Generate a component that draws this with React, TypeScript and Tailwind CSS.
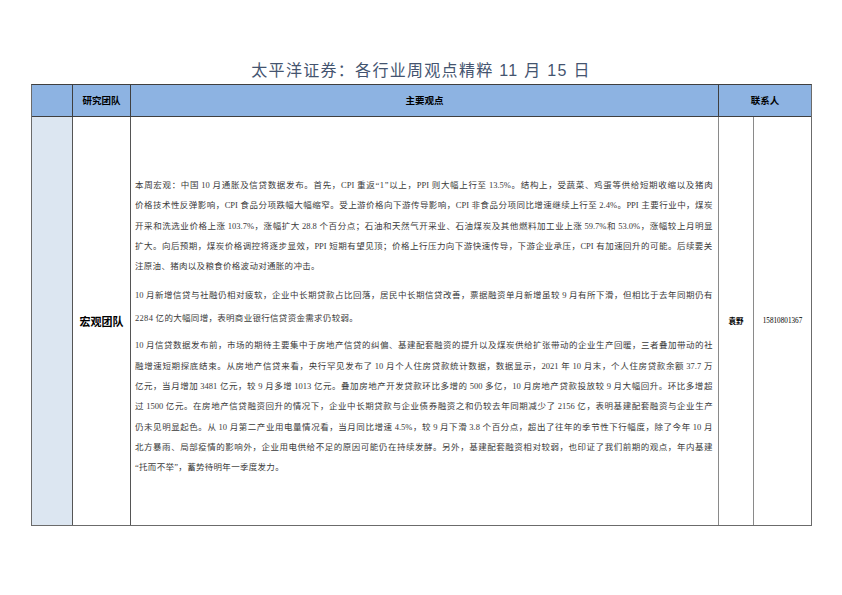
import React from "react";

const body = "font-['Liberation_Serif','Noto_Sans_CJK_SC',serif]";
const sans = "font-['Liberation_Sans','Noto_Sans_CJK_SC',sans-serif]";

const p1 = [
  "本周宏观：中国 10 月通胀及信贷数据发布。首先，CPI 重返“1”以上，PPI 则大幅上行至 13.5%。结构上，受蔬菜、鸡蛋等供给短期收缩以及猪肉",
  "价格技术性反弹影响，CPI 食品分项跌幅大幅缩窄。受上游价格向下游传导影响，CPI 非食品分项同比增速继续上行至 2.4%。PPI 主要行业中，煤炭",
  "开采和洗选业价格上涨 103.7%，涨幅扩大 28.8 个百分点；石油和天然气开采业、石油煤炭及其他燃料加工业上涨 59.7%和 53.0%，涨幅较上月明显",
  "扩大。向后预期，煤炭价格调控将逐步显效，PPI 短期有望见顶；价格上行压力向下游快速传导，下游企业承压，CPI 有加速回升的可能。后续要关",
];
const p1last = "注原油、猪肉以及粮食价格波动对通胀的冲击。";

const p2 = [
  "10 月新增信贷与社融仍相对疲软，企业中长期贷款占比回落，居民中长期信贷改善，票据融资单月新增虽较 9 月有所下滑，但相比于去年同期仍有",
];
const p2last = "2284 亿的大幅同增，表明商业银行信贷资金需求仍较弱。";

const p3 = [
  "10 月信贷数据发布前，市场的期待主要集中于房地产信贷的纠偏、基建配套融资的提升以及煤炭供给扩张带动的企业生产回暖，三者叠加带动的社",
  "融增速短期探底结束。从房地产信贷来看，央行罕见发布了 10 月个人住房贷款统计数据，数据显示，2021 年 10 月末，个人住房贷款余额 37.7 万",
  "亿元，当月增加 3481 亿元，较 9 月多增 1013 亿元。叠加房地产开发贷款环比多增的 500 多亿，10 月房地产贷款投放较 9 月大幅回升。环比多增超",
  "过 1500 亿元。在房地产信贷融资回升的情况下，企业中长期贷款与企业债券融资之和仍较去年同期减少了 2156 亿，表明基建配套融资与企业生产",
  "仍未见明显起色。从 10 月第二产业用电量情况看，当月同比增速 4.5%，较 9 月下滑 3.8 个百分点，超出了往年的季节性下行幅度，除了今年 10 月",
  "北方暴雨、局部疫情的影响外，企业用电供给不足的原因可能仍在持续发酵。另外，基建配套融资相对较弱，也印证了我们前期的观点，年内基建",
];
const p3last = "“托而不举”，蓄势待明年一季度发力。";

function tokens(s: string): string[] {
  const out = s.match(/\s?[A-Za-z0-9.%]+\s?|\s+|./gu) || [];
  return out.filter((t) => t.trim() !== "");
}

function Lines({ lines, last, lh }: { lines: string[]; last: string; lh: string }) {
  return (
    <div>
      {lines.map((l, i) => (
        <div key={i} className={`${lh} whitespace-pre flex justify-between`}>
          {tokens(l).map((t, j) => (
            <span key={j}>{t}</span>
          ))}
        </div>
      ))}
      <div className={`${lh} whitespace-nowrap tracking-[0.3px]`}>{last}</div>
    </div>
  );
}

export default function App() {
  return (
    <div className="w-[842px] h-[595px] bg-white relative overflow-hidden">
      <div className="pt-[58px]">
        <div
          className={`h-[26px] flex items-center justify-center text-[16px] tracking-[1.3px] text-[#44546f] ${sans}`}
        >
          太平洋证券：各行业周观点精粹 11 月 15 日
        </div>
        <div className="ml-[31px] w-[781px] border border-[#6b6b6b] border-t-[#3f3f3f]">
          {/* header */}
          <div className="flex h-[32px] bg-[#8db3e2] border-b border-[#3f3f3f] text-black font-bold text-[9.5px] font-['Noto_Sans_CJK_SC',sans-serif]">
            <div className="w-[41px] border-r border-[#3f3f3f]" />
            <div className="w-[58px] border-r border-[#3f3f3f] flex items-center justify-center">研究团队</div>
            <div className="w-[588px] border-r border-[#3f3f3f] flex items-center justify-center">主要观点</div>
            <div className="flex-1 flex items-center justify-center">联系人</div>
          </div>
          {/* body */}
          <div className="flex h-[408px]">
            <div className="w-[41px] bg-[#dce6f1] border-r border-[#555]" />
            <div className="w-[58px] border-r border-[#555] flex items-center justify-center font-bold text-[11px] text-black font-['Noto_Sans_CJK_SC',sans-serif]">
              宏观团队
            </div>
            <div
              className={`w-[588px] border-r border-[#8a8a8a] pt-[58px] pl-[4px] pr-[5px] text-[8.5px] text-[#3a3a3a] ${body}`}
            >
              <Lines lines={p1} last={p1last} lh="leading-[20.3px]" />
              <div className="mt-[8px]">
                <Lines lines={p2} last={p2last} lh="leading-[23px]" />
              </div>
              <div className="mt-[5px]">
                <Lines lines={p3} last={p3last} lh="leading-[20.3px]" />
              </div>
            </div>
            <div className="w-[35px] border-r border-[#8a8a8a] flex items-center justify-center font-bold text-[7.5px] text-black font-['Noto_Sans_CJK_SC',sans-serif]">
              袁野
            </div>
            <div className={`flex-1 flex items-center justify-center text-[7.2px] text-black ${body}`}>
              15810801367
            </div>
          </div>
        </div>
      </div>
    </div>
  );
}
